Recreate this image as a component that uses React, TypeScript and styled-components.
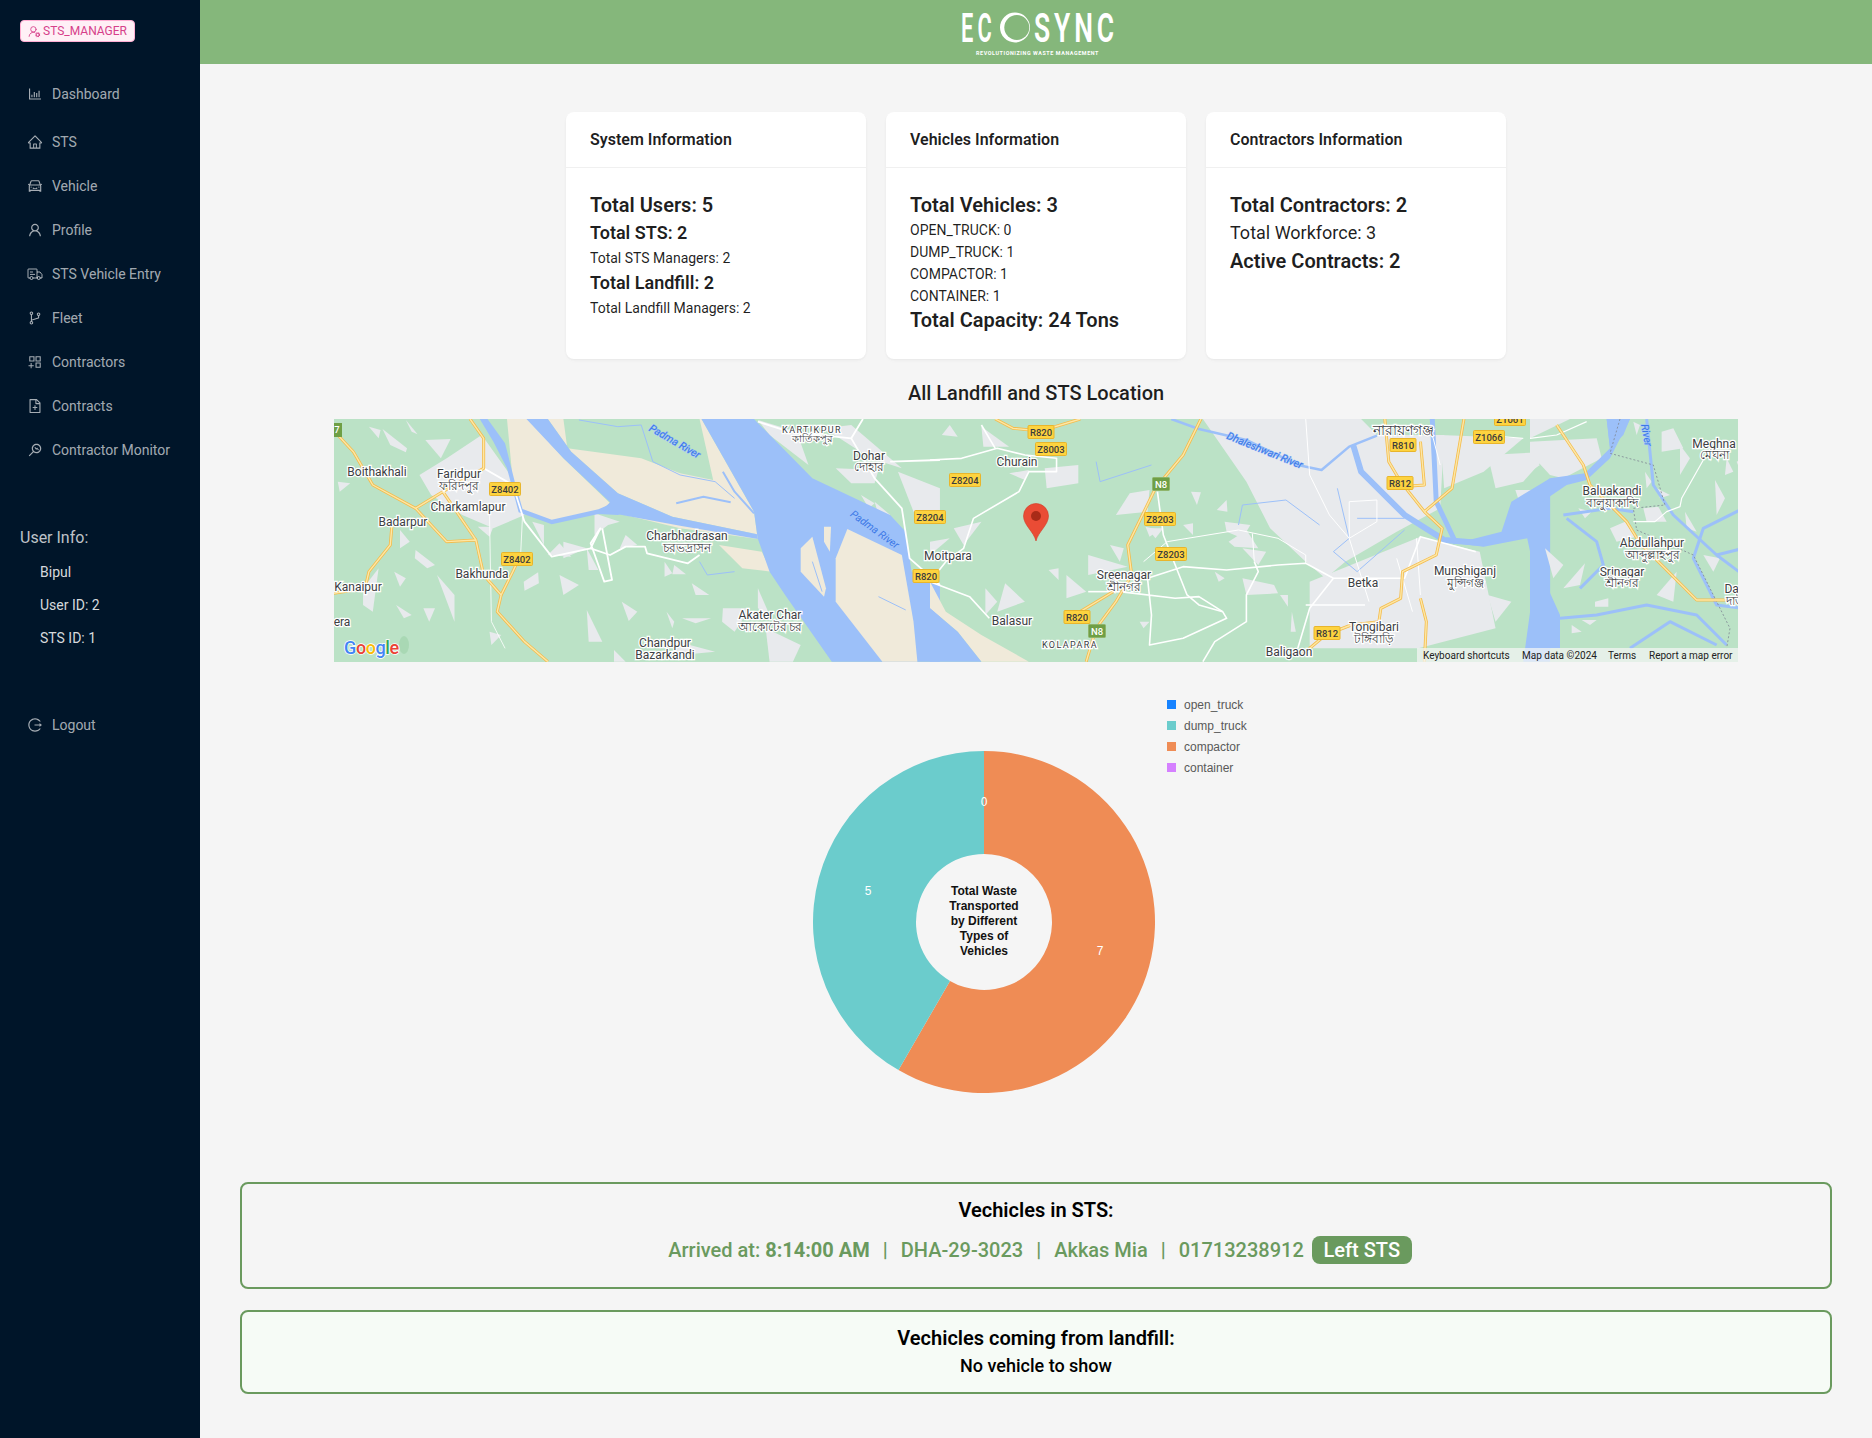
import React from "react";
import styled, { createGlobalStyle } from "styled-components";
import {
  AiOutlineBarChart,
  AiOutlineHome,
  AiOutlineCar,
  AiOutlineUser,
  AiOutlineBranches,
  AiOutlineAppstoreAdd,
  AiOutlineFileAdd,
  AiOutlineMonitor,
  AiOutlineLogout,
} from "react-icons/ai";
import { UserRoundCog } from "lucide-react";

const GlobalStyle = createGlobalStyle`
  html, body { margin: 0; padding: 0; background: #f5f5f5; }
  body { font-family: Roboto, "Liberation Sans", sans-serif; }
  * { box-sizing: border-box; }
`;

const Page = styled.div`
  display: flex;
  width: 1872px;
  height: 1438px;
  overflow: hidden;
  background: #f5f5f5;
`;

const Sidebar = styled.aside`
  width: 200px;
  flex: none;
  background: #001529;
  padding-top: 20px;
  display: flex;
  flex-direction: column;
`;

const RoleTag = styled.div`
  margin-left: 20px;
  width: 115px;
  height: 22px;
  display: flex;
  align-items: center;
  justify-content: center;
  gap: 2px;
  font-size: 12px;
  color: #d6408a;
  background: #fff0f6;
  border: 1px solid #ffadd2;
  border-radius: 4px;
`;

const Menu = styled.nav`
  margin-top: 32px;
  display: flex;
  flex-direction: column;
`;

const MenuItem = styled.div<{ $gap?: number }>`
  height: 40px;
  margin-bottom: ${(p) => p.$gap ?? 4}px;
  display: flex;
  align-items: center;
  padding-left: 27px;
  gap: 9px;
  font-size: 14px;
  color: rgba(255, 255, 255, 0.65);
  svg { flex: none; width: 16px; height: 16px; }
`;

const UserInfo = styled.section`
  margin-top: 52px;
  padding-left: 20px;
  color: rgba(255, 255, 255, 0.85);
`;

const UserTitle = styled.div`
  font-size: 16px;
  line-height: 24px;
  color: rgba(255, 255, 255, 0.75);
  margin-bottom: 6px;
`;

const UserLine = styled.div`
  font-size: 14px;
  line-height: 33px;
  padding-left: 20px;
`;

const LogoutWrap = styled.div`
  margin-top: 50px;
`;

const Content = styled.main`
  flex: 1;
  min-width: 0;
  display: flex;
  flex-direction: column;
`;

const Header = styled.header`
  height: 64px;
  flex: none;
  background: #85b77b;
  display: flex;
  align-items: center;
  justify-content: center;
`;

const Cards = styled.div`
  margin-top: 48px;
  display: flex;
  justify-content: center;
  gap: 20px;
`;

const Card = styled.article`
  width: 300px;
  height: 247px;
  background: #fff;
  border-radius: 8px;
  box-shadow: 0 1px 2px rgba(0, 0, 0, 0.03), 0 1px 6px -1px rgba(0, 0, 0, 0.02), 0 2px 4px rgba(0, 0, 0, 0.02);
`;

const CardHead = styled.h3`
  margin: 0;
  height: 56px;
  padding: 0 24px;
  display: flex;
  align-items: center;
  font-size: 16px;
  font-weight: 600;
  color: rgba(0, 0, 0, 0.88);
  border-bottom: 1px solid #f0f0f0;
`;

const CardBody = styled.div`
  padding: 24px;
  color: rgba(0, 0, 0, 0.88);
`;

const StatLarge = styled.div`
  font-size: 20px;
  line-height: 26px;
  font-weight: 600;
  margin-bottom: 1px;
`;

const StatMedium = styled.div<{ $plain?: boolean }>`
  font-size: 18px;
  line-height: 28px;
  font-weight: ${(p) => (p.$plain ? 400 : 600)};
  margin-bottom: ${(p) => (p.$plain ? 1 : 0)}px;
`;

const StatSmall = styled.div`
  font-size: 14px;
  line-height: 22px;
`;

const SectionTitle = styled.h2`
  margin: 20px 0 12px;
  font-size: 20px;
  line-height: 28px;
  font-weight: 500;
  text-align: center;
  color: rgba(0, 0, 0, 0.88);
`;

const MapFrame = styled.div`
  position: relative;
  width: 1404px;
  height: 243px;
  margin: 0 auto;
  overflow: hidden;
`;

const MapSvg = styled.svg`
  display: block;
  font-family: Roboto, "Liberation Sans", sans-serif;
  path { vector-effect: non-scaling-stroke; }
`;

const MapLabel = styled.text<{ $size?: number; $spaced?: boolean }>`
  font-size: ${(p) => p.$size ?? 12}px;
  letter-spacing: ${(p) => (p.$spaced ? "1.4px" : "0")};
  fill: #3c4043;
  stroke: #fff;
  stroke-width: 2.5px;
  paint-order: stroke;
  text-anchor: middle;
`;

const RiverLabel = styled.text`
  font-size: 10.5px;
  font-style: italic;
  fill: #3b78e7;
  stroke: #9cc0f9;
  stroke-width: 1px;
  paint-order: stroke;
  text-anchor: middle;
`;

const ShieldText = styled.text<{ $green?: boolean }>`
  font-size: 9.5px;
  font-weight: 500;
  fill: ${(p) => (p.$green ? "#fff" : "#3c3c3c")};
  text-anchor: middle;
`;

const GoogleText = styled.text`
  font-size: 18px;
  font-weight: 500;
  letter-spacing: -0.4px;
  stroke: #fff;
  stroke-width: 1.5px;
  paint-order: stroke;
`;

const MapFooter = styled.div`
  position: absolute;
  right: 0;
  bottom: 0;
  height: 14px;
  display: flex;
  align-items: center;
  background: rgba(245, 245, 245, 0.72);
  font-size: 10px;
  color: #222;
  white-space: nowrap;
`;

const FooterItem = styled.span<{ $w: number }>`
  width: ${(p) => p.$w}px;
  padding-left: 6px;
`;

const ChartRow = styled.div`
  width: 600px;
  margin: 27px auto 0;
  display: flex;
  align-items: flex-start;
  gap: 12px;
`;

const Pie = styled.svg`
  display: block;
  flex: none;
  margin: 62px 0 0 77px;
  font-family: "Liberation Sans", Arial, sans-serif;
`;

const PieValue = styled.text`
  font-size: 12px;
  fill: #fff;
  text-anchor: middle;
`;

const PieCenter = styled.text`
  font-size: 12px;
  font-weight: 700;
  fill: #111;
  text-anchor: middle;
`;

const Legend = styled.ul`
  list-style: none;
  margin: 0;
  padding: 5px 0 0;
  display: flex;
  flex-direction: column;
  font-family: "Liberation Sans", Arial, sans-serif;
`;

const LegendItem = styled.li`
  height: 21px;
  display: flex;
  align-items: center;
  gap: 8px;
  font-size: 12px;
  color: #595959;
`;

const LegendSwatch = styled.span<{ $c: string }>`
  width: 9px;
  height: 9px;
  background: ${(p) => p.$c};
`;

const InfoBox = styled.section<{ $tint?: boolean; $h: number; $mt: number }>`
  width: 1592px;
  height: ${(p) => p.$h}px;
  margin: ${(p) => p.$mt}px auto 0;
  flex: none;
  border: 2px solid #6a9a5e;
  border-radius: 8px;
  background: ${(p) => (p.$tint ? "#f6fbf6" : "#f5f5f5")};
  text-align: center;
  padding-top: 12px;
  color: #000;
`;

const InfoTitle = styled.h3`
  margin: 0;
  font-size: 20px;
  line-height: 28px;
  font-weight: 600;
`;

const InfoEmpty = styled.p`
  margin: 0;
  font-size: 18px;
  line-height: 28px;
  font-weight: 500;
`;

const VehicleRow = styled.div`
  margin-top: 12px;
  padding-left: 8px;
  display: flex;
  justify-content: center;
  align-items: center;
  font-size: 20px;
  line-height: 28px;
  font-weight: 500;
  color: #6a9a5e;
  white-space: pre;
`;

const Separator = styled.span`
  padding: 0 13px;
`;

const LeftButton = styled.button`
  margin-left: 8px;
  width: 100px;
  height: 28px;
  border: 0;
  border-radius: 8px;
  padding: 0;
  background: #6a9a5e;
  color: #fff;
  font: 500 20px/28px Roboto, sans-serif;
`;

const Strong = styled.strong`
  font-weight: 700;
`;

const TruckIcon = () => (
  <svg viewBox="0 0 16 14" fill="none" stroke="currentColor" strokeWidth="1">
    <path d="M3 11H1.5a.5.5 0 0 1-.5-.5v-8a.5.5 0 0 1 .5-.5h8a.5.5 0 0 1 .5.5V11H6" />
    <path d="M10 5h3l2 2.6V11h-2M10 11h.2" />
    <circle cx="4.5" cy="11" r="1.5" />
    <circle cx="11.7" cy="11" r="1.5" />
    <path d="M3 5h3M3 7.4h5" />
  </svg>
);

const items: [string, React.ReactNode, number?][] = [
  ["Dashboard", <AiOutlineBarChart />, 8],
  ["STS", <AiOutlineHome />],
  ["Vehicle", <AiOutlineCar />],
  ["Profile", <AiOutlineUser />],
  ["STS Vehicle Entry", <TruckIcon />],
  ["Fleet", <AiOutlineBranches />],
  ["Contractors", <AiOutlineAppstoreAdd />],
  ["Contracts", <AiOutlineFileAdd />],
  ["Contractor Monitor", <AiOutlineMonitor />],
];

const Logo = () => (
  <svg width="170" height="55" viewBox="0 0 170 55" fontFamily="Roboto, sans-serif" fill="#fff">
    <text x="10" y="36.5" fontSize="41" fontWeight="600" letterSpacing="8" textLength="35" lengthAdjust="spacingAndGlyphs">EC</text>
    <circle cx="64" cy="22.500" r="15" />
    <circle cx="65.800" cy="22.500" r="12.500" fill="#85b77b" />
    <text x="83" y="36.5" fontSize="41" fontWeight="600" letterSpacing="6" textLength="84" lengthAdjust="spacingAndGlyphs">SYNC</text>
    <text x="25" y="50" fontSize="5.5" fontWeight="700" letterSpacing="0.6" textLength="123" lengthAdjust="spacingAndGlyphs">REVOLUTIONIZING WASTE MANAGEMENT</text>
  </svg>
);

const WATER = "#9cc0f9";
const SAND = "#f0eada";
const GRAY = "#e8eaed";
const GREEN = "#bbe2c6";

const Polys = ({ list, fill }: { list: string[]; fill: string }) => (
  <>
    {list.map((p, i) => (
      <polygon key={i} points={p} fill={fill} />
    ))}
  </>
);

const Lines = ({ list, color, width, dash }: { list: string[]; color: string; width: number; dash?: string }) => (
  <>
    {list.map((d, i) => (
      <path key={i} d={d} fill="none" stroke={color} strokeWidth={width} strokeLinejoin="round" strokeDasharray={dash} />
    ))}
  </>
);

const Highways = ({ list }: { list: string[] }) => (
  <>
    <Lines list={list} color="#f4bc4c" width={3} />
    <Lines list={list} color="#fde7a6" width={1.4} />
  </>
);

const grayA = [
  "300,130 390,60 470,190 500,300 420,340 340,300 260,240 230,180",
  "100,35 130,45 125,70", "135,42 198,100 195,112 155,90", "195,15 225,58 210,50", "245,75 310,72 285,130",
  "20,200 52,205 25,230", "165,470 195,490 180,515", "85,520 125,460 110,590 85,570", "170,570 210,600 190,610",
  "240,580 270,580 255,620", "275,480 320,540 320,620", "220,405 270,450 250,460 218,430", "180,345 205,380 180,400",
  "498,500 535,472 537,505 500,527", "590,480 640,510 600,540", "750,560 790,590 768,618", "660,585 700,680 665,680",
  "865,590 885,620 880,640", "905,610 980,610 940,625", "930,505 975,540 940,540", "1010,580 1080,580 1040,650 1008,620",
  "1100,520 1130,600 1100,580", "410,650 440,660 415,690", "380,335 420,335 410,365", "680,295 745,320 715,330 680,360",
  "760,360 790,390 745,400", "860,440 880,475 860,485", "885,450 915,478 880,478", "660,400 690,465 665,465",
  "1120,640 1210,690 1190,740 1130,740", "1100,15 1200,50 1230,150 1130,60", "1300,160 1410,165 1400,205 1340,205",
  "1270,40 1340,30 1470,160 1390,130", "1460,170 1568,220 1568,290 1500,290", "730,705 760,740 730,740",
  "860,670 990,710 900,720", "520,320 550,330 550,390", "560,420 590,385 620,425", "600,380 660,400 600,430",
  "1365,240 1400,265 1385,280", "1400,260 1440,300 1410,300",
];
const sandA = [
  "455,12 510,12 600,130 720,265 690,290 570,322 490,285 470,200",
  "560,12 955,12 1090,290 1098,358 880,305 740,235 620,110",
  "740,295 900,325 1098,358 1100,372 900,340",
  "1000,390 1110,410 1135,470 1060,460",
];
const greenOnSandA = ["600,12 950,12 985,195 900,175 800,130 610,100"];
const waterA = [
  "955,12 1090,12 1240,190 1440,300 1480,350 1495,470 1568,510 1568,740 1290,740 1170,540 1130,470 1100,372 1098,358 1090,290",
  "385,12 405,12 450,85 475,200 495,282 570,314 690,283 720,268 760,290 740,300 690,297 570,328 485,292 455,160 420,80",
  "505,12 560,12 620,110 740,235 880,305 1098,358 1100,372 900,332 740,298 700,285 720,262 600,130",
];
const islandsA = [
  "1240,365 1275,520 1270,545 1210,470 1210,400",
  "1270,335 1288,335 1285,410 1270,380",
  "1330,342 1470,420 1500,620 1510,740 1420,740 1300,560 1300,430",
];
const waterOnSandA = ["M1010 170 L1040 230 L1090 295", "M890 265 L960 245 L1030 262"];
const roadsA = [
  "M395 160 L470 210 L500 320 L570 425 L670 400 L695 340 L670 385 L705 500 L725 495 L700 340",
  "M670 400 L720 420 L760 395 L810 395 L815 415 L920 445 L950 420",
  "M1100 20 L1180 50 L1340 70 L1370 12",
  "M1340 70 L1400 190 L1470 280 L1490 430 L1568 510",
  "M1440 140 L1568 135",
];
const thinRoadsA = ["M495 300 L490 420", "M410 300 L415 620 L450 700"];
const highwaysA = [
  "M20 60 L60 110 L110 210 L220 280 L290 230 L395 160 L395 70 L360 12",
  "M220 280 L300 380 L375 375 L395 480 L440 540 L430 590 L500 680 L560 740",
  "M290 230 L375 375",
  "M160 320 L155 390 L100 470 L90 520 L10 535",
  "M490 420 L470 470 L440 540",
];
const riversA = [
  "M640 15 L740 35 L800 30 L830 140 L900 180 L990 200 L1040 250",
  "M950 440 L970 480 L1040 470",
  "M1240 440 L1265 530",
  "M1410 545 L1480 585",
];

const grayB = [
  "690,12 1090,12 1130,60 1300,60 1290,280 1180,350 1050,440 1000,490 950,440 860,340 800,200",
  "960,500 1240,365 1390,410 1430,640 1235,700 960,700",
  "1290,60 1500,70 1400,170 1300,220",
  "50,30 70,65 30,60", "130,35 200,95 135,95", "290,160 375,150 375,205 295,220", "200,175 250,165 240,195",
  "60,340 130,320 85,390", "0,380 50,370 0,420", "140,520 170,560 140,600", "190,505 240,560 170,590",
  "300,465 325,460 325,495", "345,480 395,530 345,550", "400,420 500,455 400,480", "455,390 490,400 480,440",
  "505,235 555,225 550,290 470,300", "660,230 685,232 675,270", "725,285 750,255 752,290", "745,320 810,330 790,370 750,350",
  "545,335 580,345 555,365", "640,330 665,325 665,360", "755,380 800,345 830,400 770,395", "790,400 850,410 830,450",
  "885,540 905,540 905,575", "915,590 925,650 912,650", "530,620 555,620 540,640", "590,400 620,400 600,430",
  "790,490 870,510 880,535 800,540", "720,470 745,490 730,500", "550,340 590,340 570,370",
  "1410,120 1568,110 1500,200 1430,220", "1480,225 1550,225 1490,260",
  "1410,540 1470,560 1430,620",
];
const thinB = [
  "M0 135 L80 130 L170 100 L240 120 L320 130 L320 170 L250 170 L225 230 L110 310 L85 400 L40 440 L0 500 L100 545 L150 610",
  "M130 30 L165 100",
  "M480 530 L620 550 L680 545 L740 590 L750 610 L640 670 L555 690 L560 600 L550 490 L640 455 L750 465 L880 450 L950 445 L1020 490 L1200 490 L1240 365 L1380 410",
  "M575 230 L590 360 L650 540 L680 570 L740 590",
  "M820 440 L830 470 L800 540 L800 620 L720 680 L690 740",
  "M1020 490 L960 580 L930 700",
  "M950 570 L1100 570",
  "M400 530 L480 530",
];
const hairB = [
  "M540 440 L600 380 L780 345 L880 370 L950 420 L950 445",
  "M815 355 L820 440",
  "M1060 370 L1110 560",
  "M1230 370 L1240 540",
  "M1180 430 L1220 590",
  "M950 12 L960 180 L1010 300 L1060 370 L1130 320 L1130 255 L1060 260 L1060 370",
  "M1500 70 L1400 60",
  "M1270 60 L1290 150",
];
const riversB = [
  "M780 330 L790 270 L900 255 L985 330",
  "M1200 345 L1080 470 L1020 410 L1060 370",
  "M420 140 L430 200 L560 150",
  "M1080 310 L1200 310",
  "M1030 220 L1060 370",
];
const highwaysB = [
  "M165 12 L210 40 L280 48 L380 12",
  "M685 12 L640 120 L570 220 L500 390 L510 480 L470 560 L420 640 L395 740",
  "M380 590 L470 525",
  "M1150 12 L1160 140 L1190 200 L1250 290 L1295 340 L1280 420 L1195 470 L1190 550 L1140 580 L1135 620 L1065 630 L1000 660 L940 720",
  "M1240 80 L1250 210 L1190 215",
  "M1350 12 L1320 220 L1250 290",
  "M1240 550 L1255 620 L1250 740",
];

const waterC = [
  "0,240 60,190 165,175 240,100 230,12 300,12 240,130 170,195 110,210 0,285",
  "0,300 45,370 45,500 90,600 90,700 0,700",
  "230,12 300,12 280,60 240,100",
];
const grayC = [
  "0,12 120,12 0,70", "0,80 200,70 215,130 100,190 60,180 0,115", "240,340 285,320 320,365 260,380",
  "45,400 100,450 70,490", "100,520 165,445 150,510", "340,280 385,275 410,320 350,320", "195,560 235,550 235,575 195,575",
  "395,50 430,40 460,100 395,110", "450,90 480,130 450,180", "555,195 585,250 560,300", "380,540 440,470 430,560",
  "345,170 365,200 350,220", "465,290 500,350 470,340", "310,20 330,30 320,60", "520,420 570,430 550,470", "155,615 200,615 180,630",
  "125,630 155,650 125,655", "620,140 640,130 640,190", "590,130 610,170 585,180", "145,280 185,290 165,310", "0,130 30,150 0,170",
  "380,220 420,240 390,250",
];
const riversC = [
  "M110 310 L200 380 L220 450 L150 520",
  "M350 12 L370 210 L430 300 L560 420 L640 480",
  "M640 280 L520 340 L490 430 L560 570 L640 580",
  "M90 610 L200 600 L350 570 L500 600 L590 690",
  "M300 700 L420 620 L560 690",
  "M100 300 L240 280 L310 290",
  "M640 400 L560 420",
];
const thinC = ["M0 70 L80 60 L170 20", "M310 320 L375 320 L410 290 L450 275 L455 250 L520 135"];
const dashC = "M270 12 L240 115 L370 150 L405 270 L310 280 L320 345 L490 420 L600 640 L590 700";
const highwayC = ["M80 30 L160 150 L180 210 L290 320 L330 385 L500 555 L620 555"];

type Lbl = [string, number, number, number?, boolean?];
const labels: Lbl[] = [
  ["Boithakhali", 43, 57], ["Faridpur", 125, 59], ["Charkamlapur", 134, 92], ["Badarpur", 69, 107],
  ["Bakhunda", 148, 159], ["Kanaipur", 24, 172], ["era", 8, 207], ["Charbhadrasan", 353, 121],
  ["Akater Char", 436, 200], ["Chandpur", 331, 228], ["Bazarkandi", 331, 240], ["Dohar", 535, 41],
  ["KARTIKPUR", 478, 14, 9, true], ["Churain", 683, 47], ["Moitpara", 614, 141], ["Sreenagar", 790, 160],
  ["Balasur", 678, 206], ["KOLAPARA", 736, 229, 9, true], ["Betka", 1029, 168], ["Munshiganj", 1131, 156],
  ["Tongibari", 1040, 212], ["Baligaon", 955, 237], ["Meghna", 1380, 29], ["Baluakandi", 1278, 76],
  ["Abdullahpur", 1318, 128], ["Srinagar", 1288, 157], ["Dau", 1401, 174],
  ["ফরিদপুর", 125, 71], ["চরভদ্রাসন", 353, 133], ["আকোটের চর", 436, 212], ["দোহার", 535, 52], ["কার্তিকপুর", 478, 23, 10],
  ["শ্রীনগর", 790, 172], ["মুন্সিগঞ্জ", 1131, 168], ["টঙ্গিবাড়ি", 1040, 224], ["নারায়ণগঞ্জ", 1069, 16, 14],
  ["মেঘনা", 1380, 40], ["বালুয়াকান্দি", 1278, 88], ["আব্দুল্লাহপুর", 1318, 140], ["শ্রীনগর", 1288, 168], ["দাউ", 1401, 186],
];

type Sh = [string, number, number, boolean?];
const shields: Sh[] = [
  ["Z8402", 171, 70], ["Z8402", 183, 140], ["R820", 592, 157], ["Z8204", 596, 98], ["R820", 707, 13],
  ["Z8003", 717, 30], ["Z8204", 631, 61], ["N8", 827, 65, true], ["Z8203", 826, 100], ["Z8203", 837, 135],
  ["R820", 743, 198], ["N8", 763, 212, true], ["R812", 993, 214], ["R810", 1069, 26], ["R812", 1066, 64],
  ["Z1066", 1155, 18], ["Z1061", 1176, 0],
];

const MapDrawing = () => (
  <MapSvg width="1404" height="243" viewBox="0 0 1404 243">
    <rect width="1404" height="243" fill={GREEN} />
    <g transform="translate(-4 -4) scale(0.389 0.3333)">
      <Polys list={grayA} fill={GRAY} />
      <Polys list={sandA} fill={SAND} />
      <Polys list={greenOnSandA} fill={GREEN} />
      <Polys list={waterA} fill={WATER} />
      <Polys list={islandsA} fill={SAND} />
      <Lines list={waterOnSandA} color={WATER} width={2} />
      <Lines list={riversA} color={WATER} width={1} />
      <Lines list={thinRoadsA} color="#fff" width={0.8} />
      <Lines list={roadsA} color="#fff" width={1.8} />
      <Highways list={highwaysA} />
    </g>
    <g transform="translate(596 -4) scale(0.3955 0.3333)">
      <Polys list={grayB} fill={GRAY} />
      <Polys list={["0,500 40,590 130,660 250,740 130,740 70,650 0,580"]} fill={SAND} />
      <Polys list={["0,580 70,650 130,740 0,740"]} fill={WATER} />
      <Polys list={["1568,190 1470,260 1445,350 1330,385 1400,395 1510,370 1530,480 1500,740 1568,740"]} fill={WATER} />
      <Lines list={["M610 12 L680 42 L800 75 L930 150 L990 165 L1060 95 L1130 62"]} color={WATER} width={2.5} />
      <Lines list={["M1070 90 L1090 170 L1200 300 L1300 375 L1400 385"]} color={WATER} width={6} />
      <Lines list={["M1270 12 L1280 260 L1330 385"]} color={WATER} width={5} />
      <Lines list={riversB} color={WATER} width={1} />
      <Lines list={hairB} color="#fff" width={1} />
      <Lines list={thinB} color="#fff" width={1.6} />
      <Highways list={highwaysB} />
    </g>
    <g transform="translate(1196 -4) scale(0.3333)">
      <Polys list={grayC} fill={GRAY} />
      <Polys list={waterC} fill={WATER} />
      <Lines list={riversC} color={WATER} width={3} />
      <Lines list={[dashC]} color="#7f8793" width={0.8} dash="2 2" />
      <Lines list={thinC} color="#fff" width={1.2} />
      <Highways list={highwayC} />
    </g>
    <RiverLabel x="341" y="26" transform="rotate(30 341 22)">Padma River</RiverLabel>
    <RiverLabel x="541" y="114" transform="rotate(36 541 110)">Padma River</RiverLabel>
    <RiverLabel x="931" y="35" transform="rotate(22 931 31)">Dhaleshwari River</RiverLabel>
    <RiverLabel x="1313" y="20" transform="rotate(80 1313 16)">River</RiverLabel>
    {labels.map(([t, x, y, s, sp], i) => (
      <MapLabel key={i} x={x} y={y} $size={s} $spaced={sp}>
        {t}
      </MapLabel>
    ))}
    {shields.map(([t, x, y, g], i) => {
      const w = t.length > 2 ? (t.length > 4 ? 31 : 26) : 17;
      return (
        <g key={i}>
          <rect x={x - w / 2} y={y - 6.5} width={w} height={13} rx={1} fill={g ? "#6f9f45" : "#fdd33f"} stroke={g ? "#8fb56b" : "#e8b52c"} />
          <ShieldText x={x} y={y + 3.5} $green={g}>
            {t}
          </ShieldText>
        </g>
      );
    })}
    <rect x="-6" y="4" width="14" height="14" fill="#6f9f45" />
    <ShieldText x="3" y="14" $green>
      7
    </ShieldText>
    <path d="M702 122c-2-9-12.5-16-12.5-25a12.5 12.5 0 0 1 25 0c0 9-10.500 16-12.500 25z" fill="#ea4c35" stroke="#d13a26" strokeWidth=".6" />
    <circle cx="702" cy="97" r="5" fill="#a92b18" />
    <ellipse cx="70" cy="226" rx="5" ry="9" fill="#a9d8b4" />
    <GoogleText x="10" y="235">
      <tspan fill="#4285f4">G</tspan>
      <tspan fill="#ea4335">o</tspan>
      <tspan fill="#fbbc05">o</tspan>
      <tspan fill="#4285f4">g</tspan>
      <tspan fill="#34a853">l</tspan>
      <tspan fill="#ea4335">e</tspan>
    </GoogleText>
  </MapSvg>
);

const CX = 171;
const CY = 171;
const R = 171;
const pt = (deg: number, r: number) => {
  const a = ((deg - 90) * Math.PI) / 180;
  return [CX + r * Math.cos(a), CY + r * Math.sin(a)];
};
const slice = (a: number, b: number) => {
  const [x1, y1] = pt(a, R);
  const [x2, y2] = pt(b, R);
  const [x3, y3] = pt(b, 68);
  const [x4, y4] = pt(a, 68);
  const large = b - a > 180 ? 1 : 0;
  return `M${x1} ${y1}A${R} ${R} 0 ${large} 1 ${x2} ${y2}L${x3} ${y3}A68 68 0 ${large} 0 ${x4} ${y4}Z`;
};

const PieChart = () => (
  <Pie width="342" height="342" viewBox="0 0 342 342">
    <path d={slice(0, 210)} fill="#ef8c55" />
    <path d={slice(210, 360)} fill="#6bcccc" />
    <PieValue x="171" y="55">0</PieValue>
    <PieValue x="55" y="144">5</PieValue>
    <PieValue x="287" y="204">7</PieValue>
    <PieCenter x="171" y="144">Total Waste</PieCenter>
    <PieCenter x="171" y="159">Transported</PieCenter>
    <PieCenter x="171" y="174">by Different</PieCenter>
    <PieCenter x="171" y="189">Types of</PieCenter>
    <PieCenter x="171" y="204">Vehicles</PieCenter>
  </Pie>
);

const legend: [string, string][] = [
  ["open_truck", "#1783ff"],
  ["dump_truck", "#6bcccc"],
  ["compactor", "#ef8c55"],
  ["container", "#d580ff"],
];

export default function App() {
  return (
    <Page>
      <GlobalStyle />
      <Sidebar>
        <RoleTag>
          <UserRoundCog size={13} strokeWidth={1.6} />
          STS_MANAGER
        </RoleTag>
        <Menu>
          {items.map(([label, icon, gap]) => (
            <MenuItem key={label} $gap={gap}>
              {icon}
              {label}
            </MenuItem>
          ))}
        </Menu>
        <UserInfo>
          <UserTitle>User Info:</UserTitle>
          <UserLine>Bipul</UserLine>
          <UserLine>User ID: 2</UserLine>
          <UserLine>STS ID: 1</UserLine>
        </UserInfo>
        <LogoutWrap>
          <MenuItem>
            <AiOutlineLogout />
            Logout
          </MenuItem>
        </LogoutWrap>
      </Sidebar>
      <Content>
        <Header>
          <Logo />
        </Header>
        <Cards>
          <Card>
            <CardHead>System Information</CardHead>
            <CardBody>
              <StatLarge>Total Users: 5</StatLarge>
              <StatMedium>Total STS: 2</StatMedium>
              <StatSmall>Total STS Managers: 2</StatSmall>
              <StatMedium>Total Landfill: 2</StatMedium>
              <StatSmall>Total Landfill Managers: 2</StatSmall>
            </CardBody>
          </Card>
          <Card>
            <CardHead>Vehicles Information</CardHead>
            <CardBody>
              <StatLarge>Total Vehicles: 3</StatLarge>
              <StatSmall>OPEN_TRUCK: 0</StatSmall>
              <StatSmall>DUMP_TRUCK: 1</StatSmall>
              <StatSmall>COMPACTOR: 1</StatSmall>
              <StatSmall>CONTAINER: 1</StatSmall>
              <StatLarge>Total Capacity: 24 Tons</StatLarge>
            </CardBody>
          </Card>
          <Card>
            <CardHead>Contractors Information</CardHead>
            <CardBody>
              <StatLarge>Total Contractors: 2</StatLarge>
              <StatMedium $plain>Total Workforce: 3</StatMedium>
              <StatLarge>Active Contracts: 2</StatLarge>
            </CardBody>
          </Card>
        </Cards>
        <SectionTitle>All Landfill and STS Location</SectionTitle>
        <MapFrame>
          <MapDrawing />
          <MapFooter>
            <FooterItem $w={99}>Keyboard shortcuts</FooterItem>
            <FooterItem $w={86}>Map data ©2024</FooterItem>
            <FooterItem $w={41}>Terms</FooterItem>
            <FooterItem $w={95}>Report a map error</FooterItem>
          </MapFooter>
        </MapFrame>
        <ChartRow>
          <PieChart />
          <Legend>
            {legend.map(([name, c]) => (
              <LegendItem key={name}>
                <LegendSwatch $c={c} />
                {name}
              </LegendItem>
            ))}
          </Legend>
        </ChartRow>
        <InfoBox $h={107} $mt={89}>
          <InfoTitle>Vechicles in STS:</InfoTitle>
          <VehicleRow>
            Arrived at: <Strong>8:14:00 AM</Strong>
            <Separator>|</Separator>
            DHA-29-3023
            <Separator>|</Separator>
            Akkas Mia
            <Separator>|</Separator>
            01713238912
            <LeftButton>Left STS</LeftButton>
          </VehicleRow>
        </InfoBox>
        <InfoBox $tint $h={84} $mt={21}>
          <InfoTitle>Vechicles coming from landfill:</InfoTitle>
          <InfoEmpty>No vehicle to show</InfoEmpty>
        </InfoBox>
      </Content>
    </Page>
  );
}
